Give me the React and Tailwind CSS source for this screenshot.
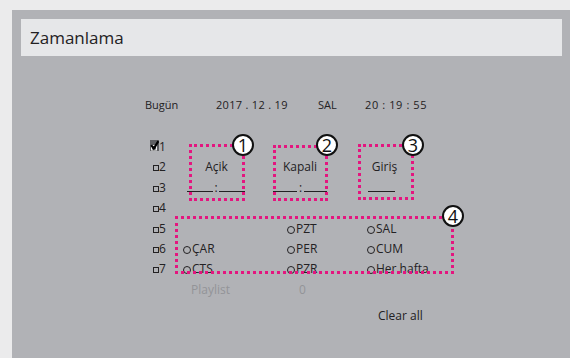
import React from "react";

const txt = "text-[#232123]";

function Box({ checked, n }) {
  return (
    <div className="flex items-baseline w-[33px]">
      {checked ? (
        <span className="relative inline-block w-[9px] h-[11px] bg-[#5f6063]">
          <svg width="9" height="11" viewBox="0 0 9 11" className="absolute left-0 top-0">
            <rect x="1.5" y="5.5" width="5" height="4.5" fill="none" stroke="#f2f2f2" strokeWidth="1" />
            <path d="M1.2 5.2 L3.8 8.6 L8.4 1.2" fill="none" stroke="#000" strokeWidth="2.2" />
          </svg>
        </span>
      ) : (
        <span className="inline-block w-[6px] h-[6px] ml-[3px] border border-[#232123]" />
      )}
      <span className={`text-[12px] ${txt}`}>{n}</span>
    </div>
  );
}

function Radio({ label }) {
  return (
    <span className={`flex items-baseline text-[12px] ${txt}`}>
      <span className="inline-block w-[8px] h-[8px] rounded-full border border-[#232123] mr-[1px] translate-y-[1px]" />
      {label}
    </span>
  );
}

function Row({ children }) {
  return <div className="flex items-center h-[20.4px] leading-[20.4px]">{children}</div>;
}

export default function App() {
  return (
    <div
      className="relative w-[570px] h-[358px] overflow-hidden bg-[#ebebec] pt-[10px] pl-[12px]"
      style={{ fontFamily: '"Open Sans", sans-serif' }}
    >
      <div className="h-[348px] bg-[#b1b2b6] pt-[9px] pl-[9px] pr-[8px]">
        <div className={`h-[37px] bg-[#e6e7e9] flex items-center pl-[9px] text-[17px] ${txt}`}>
          Zamanlama
        </div>

        {/* date row */}
        <div className={`mt-[39px] h-[20px] flex items-center pl-[124px] text-[11px] ${txt}`}>
          <span className="w-[71px]">Bugün</span>
          <span className="w-[102px] tracking-[0.3px]">2017 . 12 . 19</span>
          <span className="w-[47px]">SAL</span>
          <span className="tracking-[0.6px]">20 : 19 : 55</span>
        </div>

        {/* main rows */}
        <div className="mt-[22px] pl-[129px]">
          <Row>
            <Box checked n="1" />
          </Row>
          <Row>
            <Box n="2" />
            <div className={`ml-[6px] flex text-[12px] ${txt}`}>
              <span className="w-[55px] text-center">Açik</span>
              <span className="w-[54px] ml-[29px] text-center">Kapali</span>
              <span className="w-[55px] ml-[30px] text-center">Giriş</span>
            </div>
          </Row>
          <Row>
            <Box n="3" />
            <div className={`ml-[4px] flex items-baseline text-[12px] ${txt}`}>
              <span className="flex items-baseline w-[59px]">
                <span className="inline-block w-[26px] border-b border-[#232123]" />
                <span className="px-[1.5px]">:</span>
                <span className="inline-block w-[26px] border-b border-[#232123]" />
              </span>
              <span className="flex items-baseline ml-[27px] w-[56px]">
                <span className="inline-block w-[24px] border-b border-[#232123]" />
                <span className="px-[2px]">:</span>
                <span className="inline-block w-[23px] border-b border-[#232123]" />
              </span>
              <span className="ml-[39px] inline-block w-[27px] border-b border-[#232123]" />
            </div>
          </Row>
          <Row>
            <Box n="4" />
          </Row>
          <Row>
            <Box n="5" />
            <div className="flex">
              <span className="w-[104px]" />
              <span className="w-[80px]"><Radio label="PZT" /></span>
              <span><Radio label="SAL" /></span>
            </div>
          </Row>
          <Row>
            <Box n="6" />
            <div className="flex">
              <span className="w-[104px]"><Radio label="ÇAR" /></span>
              <span className="w-[80px]"><Radio label="PER" /></span>
              <span><Radio label="CUM" /></span>
            </div>
          </Row>
          <Row>
            <Box n="7" />
            <div className="flex">
              <span className="w-[104px]"><Radio label="CTS" /></span>
              <span className="w-[80px]"><Radio label="PZR" /></span>
              <span><Radio label="Her hafta" /></span>
            </div>
          </Row>
          <Row>
            <div className="flex text-[12px] text-[#939498] pl-[41px]">
              <span className="w-[108px]">Playlist</span>
              <span>0</span>
            </div>
          </Row>
          <div className={`mt-[6px] h-[20px] leading-[20px] pl-[228px] text-[12px] ${txt}`}>
            Clear all
          </div>
        </div>
      </div>

      {/* annotation overlays */}
      <div className="absolute left-[189px] top-[144px] w-[56px] h-[57px] border-[3px] border-dotted border-[#e4157f]" />
      <div className="absolute left-[273px] top-[145px] w-[55px] h-[56px] border-[3px] border-dotted border-[#e4157f]" />
      <div className="absolute left-[358px] top-[144px] w-[56px] h-[56px] border-[3px] border-dotted border-[#e4157f]" />
      <div className="absolute left-[175px] top-[216px] w-[279px] h-[58px] border-[3px] border-dotted border-[#e4157f]" />

      {[
        ["1", "left-[232px] top-[134px]"],
        ["2", "left-[316px] top-[134px]"],
        ["3", "left-[402px] top-[134px]"],
        ["4", "left-[442px] top-[205px]"],
      ].map(([n, pos]) => (
        <div
          key={n}
          className={`absolute ${pos} w-[22px] h-[22px] rounded-full border-2 border-[#111] bg-white flex items-center justify-center text-[18px] leading-none text-[#111]`}
        >
          {n}
        </div>
      ))}
    </div>
  );
}
